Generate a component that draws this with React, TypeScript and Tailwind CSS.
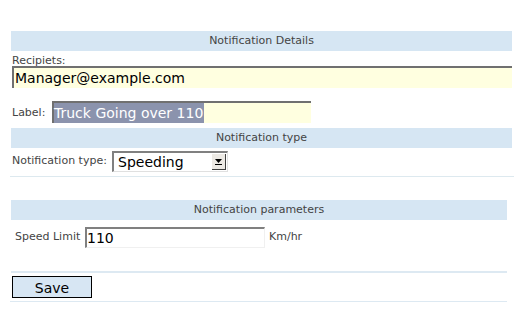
import React from "react";

const font = "font-['DejaVu_Sans',Verdana,sans-serif]";

function SectionHeader({ title, wide = true }: { title: string; wide?: boolean }) {
  return (
    <div
      className={`h-[20px] ${wide ? "w-[501px]" : "w-[496px]"} bg-[#d6e6f3] flex items-center justify-center text-[11px] text-[#444]`}
    >
      {title}
    </div>
  );
}

export default function App() {
  return (
    <div className={`w-[520px] h-[315px] bg-white pt-[31px] pl-[11px] ${font}`}>
      <SectionHeader title="Notification Details" />

      <div className="h-[15px] pl-[1px] pt-[4px] text-[11px] leading-[11px] text-[#444]">Recipiets:</div>
      <div className="ml-[1px] w-[500px] h-[22px] bg-[#ffffe0] border-t-2 border-l-2 border-[#707070] flex items-center pl-[1px] text-[14px] text-black">
        Manager@example.com
      </div>

      <div className="mt-[13px] flex items-center h-[22px]">
        <span className="pl-[1px] pt-[2px] w-[41px] text-[11px] text-[#444]">Label:</span>
        <div className="w-[259px] h-[22px] bg-[#ffffe0] border-t-2 border-l-2 border-[#707070] flex">
          <span className="h-full flex items-center bg-[#8b93ad] text-white text-[14px] pr-[1px]">
            Truck Going over 110
          </span>
        </div>
      </div>

      <div className="mt-[5px]">
        <SectionHeader title="Notification type" />
      </div>

      <div className="mt-[3px] flex items-center h-[21px]">
        <span className="pl-[1px] w-[101px] text-[11px] text-[#444]">Notification type:</span>
        <div className="w-[116px] h-[21px] bg-white border-t-2 border-l-2 border-[#808080] border-r border-b border-r-[#e0e0e0] border-b-[#e0e0e0] flex items-center">
          <span className="flex-1 pl-[4px] text-[14px] text-black">Speeding</span>
          <div className="w-[14px] h-[16px] mr-[1px] bg-[#ece9e4] border-r border-b border-[#404040] flex flex-col items-center justify-center gap-[1px]">
            <svg width="7" height="4" viewBox="0 0 7 4">
              <path d="M0 0h7L3.5 4z" fill="#000" />
            </svg>
            <div className="w-[7px] h-[1px] bg-black" />
          </div>
        </div>
      </div>

      <div className="mt-[4px] -ml-[1px] w-[504px] h-[1px] bg-[#dde9ef]" />

      <div className="mt-[23px]">
        <SectionHeader title="Notification parameters" wide={false} />
      </div>

      <div className="mt-[7px] flex items-center h-[21px]">
        <span className="pl-[4px] w-[74px] text-[11px] text-[#444]">Speed Limit</span>
        <div className="w-[180px] h-[21px] bg-white border-t-2 border-l-2 border-[#808080] border-r border-b border-r-[#f0f0f0] border-b-[#f0f0f0] flex items-center text-[14px] text-black">
          110
        </div>
        <span className="ml-[4px] text-[11px] text-[#444]">Km/hr</span>
      </div>

      <div className="mt-[23px] w-[496px] h-[2px] bg-[#dde9f2]" />

      <div className="mt-[3px] pl-[1px] flex">
        <button className="w-[80px] h-[22px] bg-[#d7e6f3] border border-black text-[14px] text-black leading-none flex items-center justify-center pt-[2px]">
          Save
        </button>
      </div>

      <div className="mt-[3px] -ml-[1px] w-[497px] h-[1px] bg-[#dde9f2]" />
    </div>
  );
}
